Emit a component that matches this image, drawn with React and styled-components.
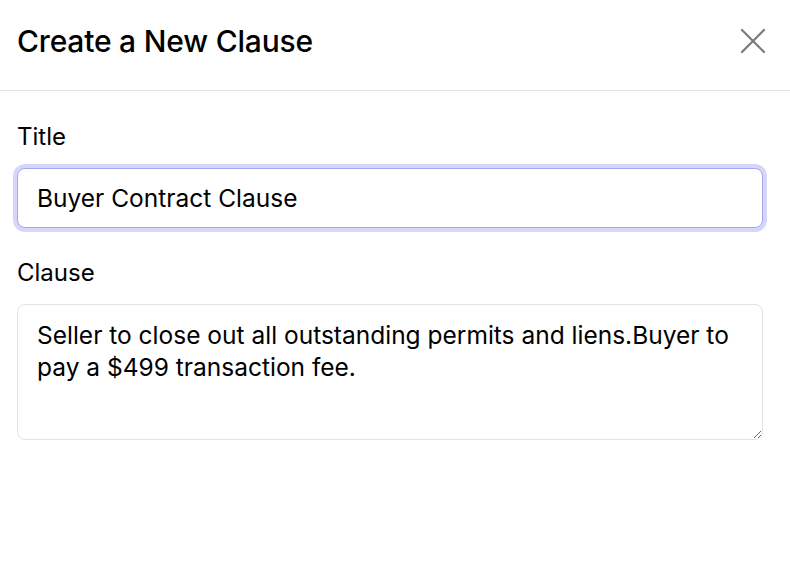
import styled, { createGlobalStyle } from 'styled-components'

const Global = createGlobalStyle`
  body {
    margin: 0;
    background: #fff;
    font-family: Inter, "Noto Sans", sans-serif;
    color: #000;
  }
`

const App = () => {
    return (
        <>
            <Global />
            <Header>
                <Heading>Create a New Clause</Heading>
                <CloseButton aria-label="close">
                    <svg width="26" height="26" viewBox="0 0 26 26">
                        <path d="M2 2 L24 24 M24 2 L2 24" stroke="#7a7a7a" strokeWidth="2.2" strokeLinecap="round" />
                    </svg>
                </CloseButton>
            </Header>
            <Body>
                <Field>
                    <Label>Title</Label>
                    <Input defaultValue="Buyer Contract Clause" autoFocus />
                </Field>
                <Field>
                    <Label>Clause</Label>
                    <TextArea defaultValue="Seller to close out all outstanding permits and liens.Buyer to pay a $499 transaction fee." />
                </Field>
            </Body>
        </>
    )
}

const Header = styled.header`
  box-sizing: border-box;
  height: 91px;
  display: flex;
  align-items: center;
  justify-content: space-between;
  padding: 0 24px 9px 17px;
  border-bottom: 1px solid #e3e3e3;
`;

const Heading = styled.h1`
  margin: 0;
  font-size: 30px;
  font-weight: 500;
  letter-spacing: -0.2px;
`;

const CloseButton = styled.button`
  border: none;
  background: none;
  padding: 0;
  display: flex;
  cursor: pointer;
`;

const Body = styled.div`
  padding: 31px 27px 0 17px;
  display: flex;
  flex-direction: column;
  gap: 30px;
`;

const Field = styled.div`
  display: flex;
  flex-direction: column;
  gap: 17px;
`;

const Label = styled.label`
  font-size: 24px;
  line-height: 29px;
`;

const Input = styled.input`
  box-sizing: border-box;
  height: 60px;
  padding: 0 19px;
  font: inherit;
  font-size: 24.5px;
  border: 1px solid #a5a5f0;
  border-radius: 8px;
  outline: none;
  box-shadow: 0 0 0 4px #d6d6fb;
`;

const TextArea = styled.textarea`
  box-sizing: border-box;
  height: 136px;
  padding: 14px 19px;
  font: inherit;
  font-size: 24.5px;
  line-height: 32px;
  border: 1px solid #e2e2e2;
  border-radius: 8px;
  outline: none;
  resize: vertical;
`;

export default App;
